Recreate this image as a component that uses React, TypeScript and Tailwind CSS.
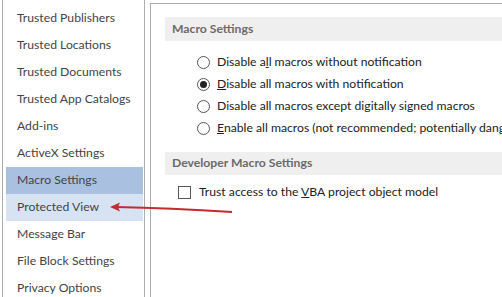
const menu = [
  "Trusted Publishers",
  "Trusted Locations",
  "Trusted Documents",
  "Trusted App Catalogs",
  "Add-ins",
  "ActiveX Settings",
  "Macro Settings",
  "Protected View",
  "Message Bar",
  "File Block Settings",
  "Privacy Options",
];

function Radio({ checked }: { checked?: boolean }) {
  return (
    <span className="w-[13px] h-[13px] rounded-full border border-[#555] bg-white flex items-center justify-center shrink-0">
      {checked && <span className="w-[7px] h-[7px] rounded-full bg-[#222]" />}
    </span>
  );
}

export default function App() {
  return (
    <div className="relative w-[502px] h-[297px] overflow-hidden bg-white flex font-['Lato',sans-serif] text-[12.2px]">
      <div className="w-[143px] ml-[2px] border-l border-r border-[#acacac] pt-[5px] pl-[3px] pr-[1px] shrink-0">
        {menu.map((m) => (
          <div
            key={m}
            className={
              "h-[27px] flex items-center pl-[11px] text-[#444] " +
              (m === "Macro Settings"
                ? "bg-[#aac0e0]"
                : m === "Protected View"
                ? "bg-[#d7e2f3]"
                : "")
            }
          >
            {m}
          </div>
        ))}
      </div>

      <div className="flex-1 ml-[5px] mt-[3px] border-l border-t border-[#acacac] pt-[13px] pl-[14px] pr-[8px]">
        <div className="h-[24px] bg-[#efefef] flex items-center pl-[7px] font-bold text-[#6a6a6a]">
          Macro Settings
        </div>
        <div className="mt-[10px] pl-[32px] text-[#222]">
          <div className="h-[22px] flex items-center gap-[7px]">
            <Radio />
            <span>
              Disable a<u>l</u>l macros without notification
            </span>
          </div>
          <div className="h-[22px] flex items-center gap-[7px]">
            <Radio checked />
            <span>
              <u>D</u>isable all macros with notification
            </span>
          </div>
          <div className="h-[22px] flex items-center gap-[7px]">
            <Radio />
            <span>
              Disable all macros except di<u>g</u>itally signed macros
            </span>
          </div>
          <div className="h-[22px] flex items-center gap-[7px] whitespace-nowrap">
            <Radio />
            <span>
              <u>E</u>nable all macros (not recommended; potentially dangerous code can run)
            </span>
          </div>
        </div>
        <div className="mt-[13px] h-[23px] bg-[#efefef] flex items-center pl-[7px] font-bold text-[#6a6a6a]">
          Developer Macro Settings
        </div>
        <div className="mt-[6px] h-[22px] flex items-center gap-[8px] pl-[13px] text-[#222]">
          <span className="w-[13px] h-[13px] border border-[#555] bg-white shrink-0" />
          <span>
            Trust access to the <u>V</u>BA project object model
          </span>
        </div>
      </div>

      <svg className="absolute left-0 top-0" width="502" height="297" viewBox="0 0 502 297">
        <path d="M232 212 Q170 208 116 207" stroke="#c42a2f" strokeWidth="2" fill="none" />
        <path d="M110 207 L120 202.5 L118 207 L120 211.5 Z" fill="#c42a2f" />
      </svg>
    </div>
  );
}
